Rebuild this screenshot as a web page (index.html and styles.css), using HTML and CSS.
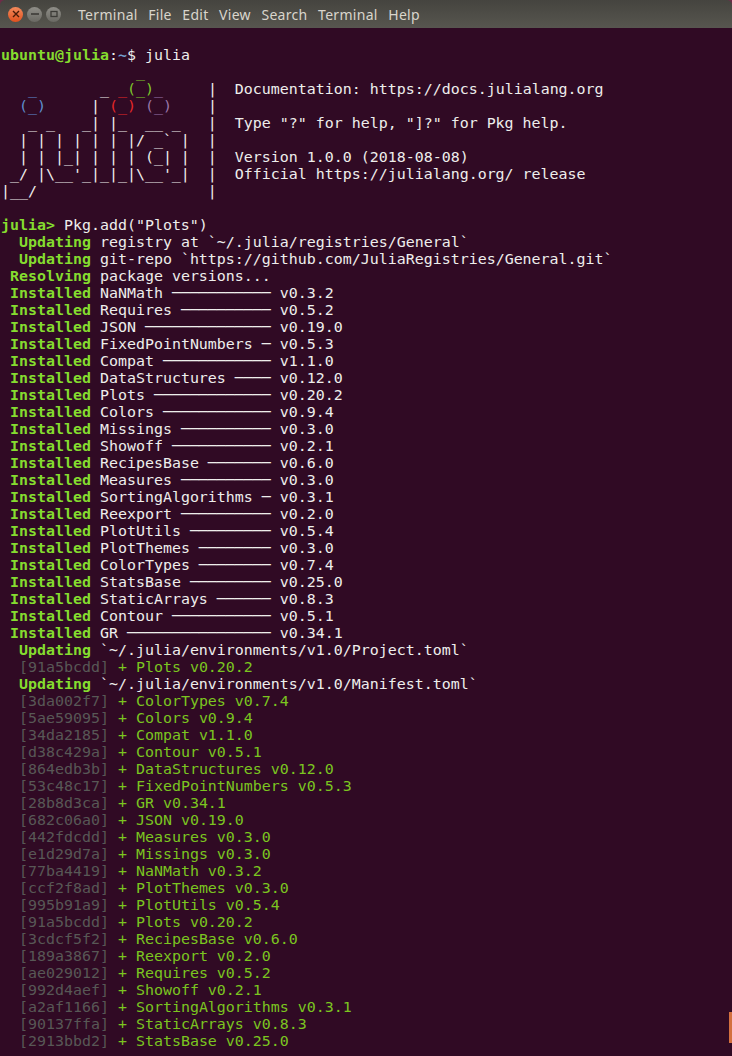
FILE: index.html
```html
<!DOCTYPE html>
<html lang="en">
<head>
<meta charset="utf-8">
<title>Terminal</title>
<link rel="stylesheet" href="styles.css">
</head>
<body>
<div class="window">
<header class="titlebar">
<div class="controls">
<span class="btn close"><svg width="8" height="8" viewBox="0 0 8 8"><path d="M1 1l6 6M7 1L1 7" stroke="#4a1c08" stroke-width="1.4"/></svg></span>
<span class="btn"><svg width="8" height="8" viewBox="0 0 8 8"><path d="M0 4h8" stroke="#3c3b37" stroke-width="1.6"/></svg></span>
<span class="btn"><svg width="8" height="8" viewBox="0 0 8 8"><rect x="1" y="1.5" width="6" height="5" fill="none" stroke="#3c3b37" stroke-width="1.3"/></svg></span>
</div>
<nav class="menu"><span>Terminal</span><span>File</span><span>Edit</span><span>View</span><span>Search</span><span>Terminal</span><span>Help</span></nav>
</header>
<pre class="term">

<b class="g">ubuntu@julia</b>:<b class="b">~</b>$ julia
               <span class="lg">_</span>
   <span class="lb">_</span>       _ <span class="lr">_</span><span class="lg">(_)</span><span class="lp">_</span>     |  Documentation: https://docs.julialang.org
  <span class="lb">(_)</span>     | <span class="lr">(_)</span> <span class="lp">(_)</span>    |
   _ _   _| |_  __ _   |  Type "?" for help, "]?" for Pkg help.
  | | | | | | |/ _` |  |
  | | |_| | | | (_| |  |  Version 1.0.0 (2018-08-08)
 _/ |\__'_|_|_|\__'_|  |  Official https://julialang.org/ release
|__/                   |

<b class="g">julia&gt;</b> Pkg.add("Plots")
  <b class="g">Updating</b> registry at `~/.julia/registries/General`
  <b class="g">Updating</b> git-repo `https://github.com/JuliaRegistries/General.git`
 <b class="g">Resolving</b> package versions...
 <b class="g">Installed</b> NaNMath ─────────── v0.3.2
 <b class="g">Installed</b> Requires ────────── v0.5.2
 <b class="g">Installed</b> JSON ────────────── v0.19.0
 <b class="g">Installed</b> FixedPointNumbers ─ v0.5.3
 <b class="g">Installed</b> Compat ──────────── v1.1.0
 <b class="g">Installed</b> DataStructures ──── v0.12.0
 <b class="g">Installed</b> Plots ───────────── v0.20.2
 <b class="g">Installed</b> Colors ──────────── v0.9.4
 <b class="g">Installed</b> Missings ────────── v0.3.0
 <b class="g">Installed</b> Showoff ─────────── v0.2.1
 <b class="g">Installed</b> RecipesBase ─────── v0.6.0
 <b class="g">Installed</b> Measures ────────── v0.3.0
 <b class="g">Installed</b> SortingAlgorithms ─ v0.3.1
 <b class="g">Installed</b> Reexport ────────── v0.2.0
 <b class="g">Installed</b> PlotUtils ───────── v0.5.4
 <b class="g">Installed</b> PlotThemes ──────── v0.3.0
 <b class="g">Installed</b> ColorTypes ──────── v0.7.4
 <b class="g">Installed</b> StatsBase ───────── v0.25.0
 <b class="g">Installed</b> StaticArrays ────── v0.8.3
 <b class="g">Installed</b> Contour ─────────── v0.5.1
 <b class="g">Installed</b> GR ──────────────── v0.34.1
  <b class="g">Updating</b> `~/.julia/environments/v1.0/Project.toml`
  <span class="h">[91a5bcdd]</span> <span class="a">+ Plots v0.20.2</span>
  <b class="g">Updating</b> `~/.julia/environments/v1.0/Manifest.toml`
  <span class="h">[3da002f7]</span> <span class="a">+ ColorTypes v0.7.4</span>
  <span class="h">[5ae59095]</span> <span class="a">+ Colors v0.9.4</span>
  <span class="h">[34da2185]</span> <span class="a">+ Compat v1.1.0</span>
  <span class="h">[d38c429a]</span> <span class="a">+ Contour v0.5.1</span>
  <span class="h">[864edb3b]</span> <span class="a">+ DataStructures v0.12.0</span>
  <span class="h">[53c48c17]</span> <span class="a">+ FixedPointNumbers v0.5.3</span>
  <span class="h">[28b8d3ca]</span> <span class="a">+ GR v0.34.1</span>
  <span class="h">[682c06a0]</span> <span class="a">+ JSON v0.19.0</span>
  <span class="h">[442fdcdd]</span> <span class="a">+ Measures v0.3.0</span>
  <span class="h">[e1d29d7a]</span> <span class="a">+ Missings v0.3.0</span>
  <span class="h">[77ba4419]</span> <span class="a">+ NaNMath v0.3.2</span>
  <span class="h">[ccf2f8ad]</span> <span class="a">+ PlotThemes v0.3.0</span>
  <span class="h">[995b91a9]</span> <span class="a">+ PlotUtils v0.5.4</span>
  <span class="h">[91a5bcdd]</span> <span class="a">+ Plots v0.20.2</span>
  <span class="h">[3cdcf5f2]</span> <span class="a">+ RecipesBase v0.6.0</span>
  <span class="h">[189a3867]</span> <span class="a">+ Reexport v0.2.0</span>
  <span class="h">[ae029012]</span> <span class="a">+ Requires v0.5.2</span>
  <span class="h">[992d4aef]</span> <span class="a">+ Showoff v0.2.1</span>
  <span class="h">[a2af1166]</span> <span class="a">+ SortingAlgorithms v0.3.1</span>
  <span class="h">[90137ffa]</span> <span class="a">+ StaticArrays v0.8.3</span>
  <span class="h">[2913bbd2]</span> <span class="a">+ StatsBase v0.25.0</span></pre>
<div class="scrollthumb"></div>
</div>
</body>
</html>
```
FILE: styles.css
```css
html, body {
  margin: 0;
  height: 100%;
  overflow: hidden;
  background: #6e2c48;
}
.window {
  position: relative;
  display: flex;
  flex-direction: column;
  height: 1056px;
  overflow: hidden;
}
.titlebar {
  display: flex;
  align-items: center;
  flex: none;
  height: 28px;
  background: linear-gradient(#45443f, #57564f);
  border-radius: 5px 5px 0 0;
}
.controls {
  display: flex;
  gap: 4px;
  padding-left: 8px;
}
.btn {
  display: flex;
  align-items: center;
  justify-content: center;
  width: 15px;
  height: 15px;
  border-radius: 50%;
  background: linear-gradient(#8f8e88, #6a6963);
}
.btn.close {
  background: linear-gradient(#f48a5c, #e0511e);
}
.menu {
  display: flex;
  gap: 10.5px;
  margin-left: 17px;
  font-family: "Noto Sans", sans-serif;
  font-size: 14px;
  letter-spacing: 0.3px;
  color: #d9d5cc;
}
.term {
  flex: 1;
  margin: 0;
  padding: 2px 0 0 1px;
  background: #300a24;
  font-family: "DejaVu Sans Mono", monospace;
  font-size: 14.95px;
  line-height: 17px;
  color: #eeeeec;
}
.g { color: #85dc2f; }
.b { color: #729fcf; }
.lg { color: #7fc82a; }
.lb { color: #5f8fcf; }
.lr { color: #e62828; }
.lp { color: #9a76a8; }
.h { color: #585856; }
.a { color: #7bc520; }
.scrollthumb {
  position: absolute;
  right: 0;
  top: 1012px;
  width: 3px;
  height: 31px;
  background: #d3703f;
}
```
